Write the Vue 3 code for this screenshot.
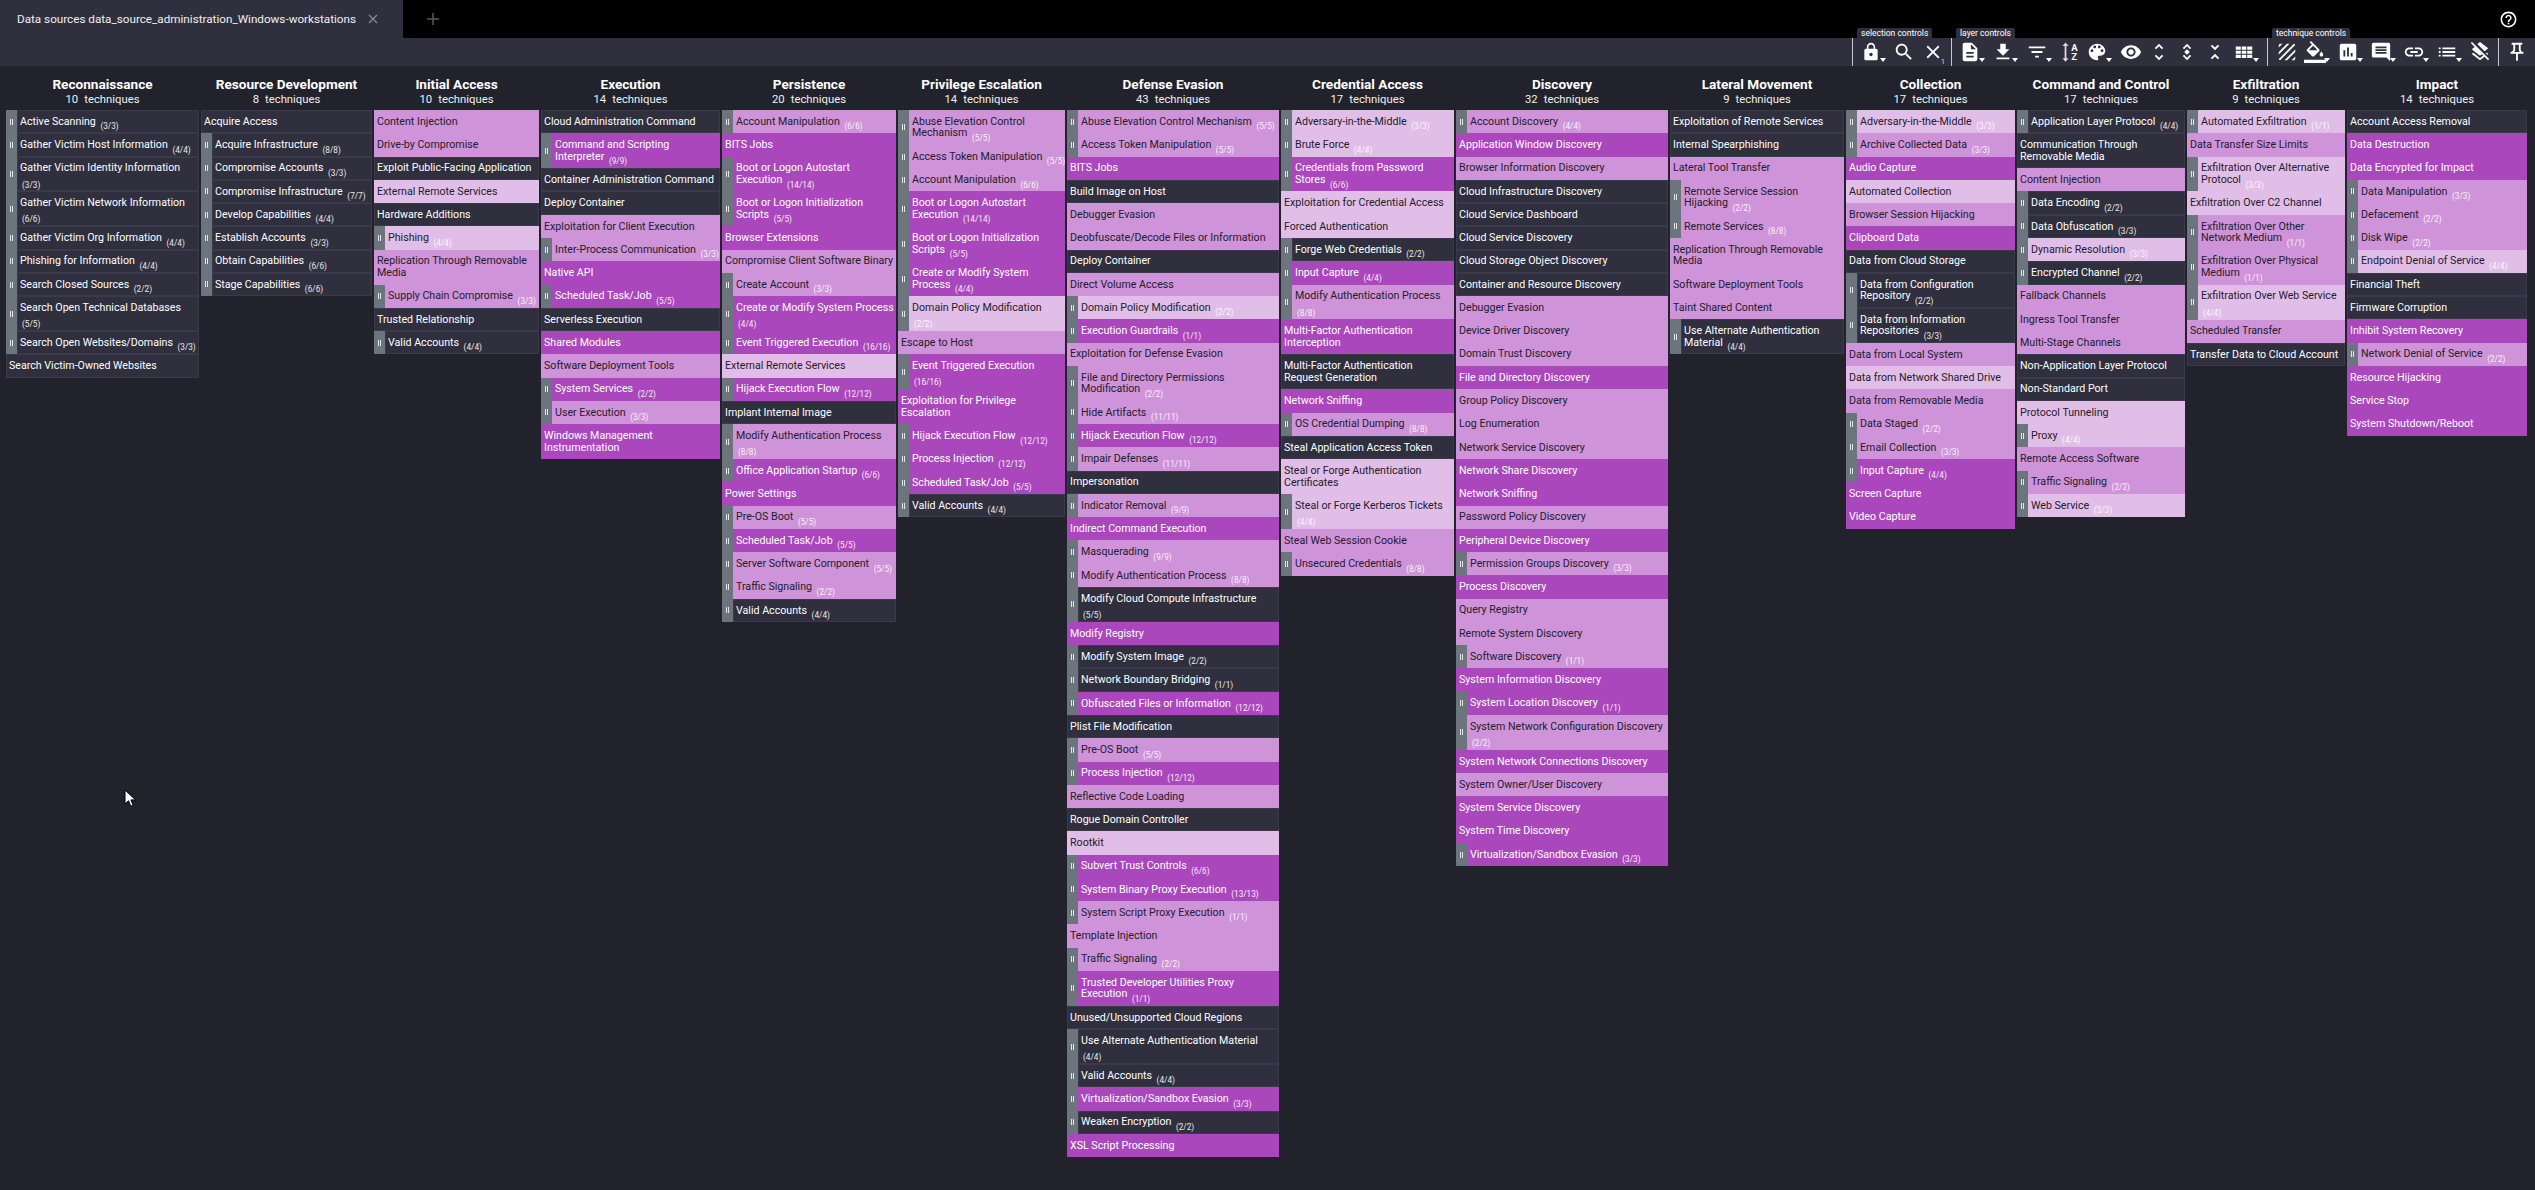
<template>
  <div class="page">
    <header class="topbar">
      <div class="tab">
        <span class="tab-title">Data sources data_source_administration_Windows-workstations</span>
        <svg class="tab-close" viewBox="0 0 10 10"><path d="M1 1l8 8M9 1l-8 8" /></svg>
      </div>
      <svg class="tab-add" viewBox="0 0 12 12"><path d="M6 0v12M0 6h12" /></svg>
      <svg class="help" viewBox="0 0 24 24">
        <path :d="icons.help" />
      </svg>
    </header>

    <div class="toolbar">
      <div v-for="group in toolGroups" :key="group.name" class="group" :class="`group-${group.name}`">
        <span v-if="group.label" class="group-label">{{ group.label }}</span>
        <div v-for="tool in group.tools" :key="tool.name" class="tool" :class="`tool-${tool.name}`">
          <template v-if="tool.name === 'sort'">
            <svg class="sort-arrow" viewBox="0 0 8 22"><path d="M4 0l3.500 4H5v14h2.500L4 22 .5 18H3V4H.5z" /></svg>
            <span class="sort-letters"><span>A</span><span>Z</span></span>
          </template>
          <svg v-else viewBox="0 0 24 24"><path :d="tool.path" /></svg>
          <span v-if="tool.menu" class="caret"></span>
          <span v-if="tool.badge" class="badge">{{ tool.badge }}</span>
        </div>
      </div>
    </div>

    <main class="matrix">
      <section v-for="tactic in tactics" :key="tactic.name" class="tactic">
        <div class="tactic-head">
          <h2>{{ tactic.name }}</h2>
          <p><span>{{ tactic.rows.length }}</span><span>techniques</span></p>
        </div>
        <div
          v-for="row in tactic.rows"
          :key="row[0]"
          class="row"
          :class="`fill-${row[1]}`"
        >
          <span v-if="row[2]" class="toggle"></span>
          <div class="cell">
            <span v-for="line in upperLines(row[0])" :key="line" class="line">{{ line }}</span>
            <span v-if="lastLine(row[0])">{{ lastLine(row[0]) }}</span>
            <span
              v-if="row[2]"
              class="count"
              :class="{ 'count-alone': !lastLine(row[0]) }"
            >({{ row[2] }})</span>
          </div>
        </div>
      </section>
    </main>

    <svg class="cursor" viewBox="0 0 12 19">
      <path d="M1 1v14l3.500-3.300 2.300 5.600 2.400-1-2.300-5.400H11.500z" />
    </svg>
  </div>
</template>

<script setup>
const icons = {
  help: "M11 18h2v-2h-2v2zm1-16C6.480 2 2 6.480 2 12s4.480 10 10 10 10-4.480 10-10S17.520 2 12 2zm0 18c-4.410 0-8-3.590-8-8s3.590-8 8-8 8 3.590 8 8-3.590 8-8 8zm0-14c-2.210 0-4 1.790-4 4h2c0-1.100.9-2 2-2s2 .9 2 2c0 2-3 1.750-3 5h2c0-2.250 3-2.500 3-5 0-2.210-1.790-4-4-4z",
  lock: "M18 8h-1V6c0-2.760-2.240-5-5-5S7 3.240 7 6v2H6c-1.100 0-2 .9-2 2v10c0 1.100.9 2 2 2h12c1.100 0 2-.9 2-2V10c0-1.100-.9-2-2-2zm-6 9c-1.100 0-2-.9-2-2s.9-2 2-2 2 .9 2 2-.9 2-2 2zm3.100-9H8.900V6c0-1.710 1.390-3.100 3.100-3.100 1.710 0 3.100 1.390 3.100 3.100v2z",
  search: "M15.500 14h-.79l-.28-.27C15.410 12.590 16 11.110 16 9.500 16 5.910 13.090 3 9.500 3S3 5.910 3 9.500 5.910 16 9.500 16c1.610 0 3.090-.59 4.230-1.570l.27.28v.79l5 4.990L20.490 19l-4.990-5zm-6 0C7.010 14 5 11.990 5 9.500S7.010 5 9.500 5 14 7.010 14 9.500 11.990 14 9.500 14z",
  clear: "M19 6.410L17.590 5 12 10.590 6.410 5 5 6.410 10.590 12 5 17.590 6.410 19 12 13.410 17.590 19 19 17.590 13.410 12z",
  file: "M14 2H6c-1.100 0-1.990.9-1.990 2L4 20c0 1.100.89 2 1.990 2H18c1.100 0 2-.9 2-2V8l-6-6zm2 16H8v-2h8v2zm0-4H8v-2h8v2zm-3-5V3.500L18.500 9H13z",
  download: "M19 9h-4V3H9v6H5l7 7 7-7zM5 18v2h14v-2H5z",
  filter: "M10 18h4v-2h-4v2zM3 6v2h18V6H3zm3 7h12v-2H6v2z",
  palette: "M12 3c-4.970 0-9 4.030-9 9s4.030 9 9 9c.83 0 1.500-.67 1.500-1.500 0-.39-.15-.74-.39-1.010-.23-.26-.38-.61-.38-.99 0-.83.67-1.500 1.500-1.500H16c2.760 0 5-2.240 5-5 0-4.420-4.030-8-9-8zm-5.500 9c-.83 0-1.500-.67-1.500-1.500S5.670 9 6.500 9 8 9.670 8 10.500 7.330 12 6.500 12zm3-4C8.670 8 8 7.330 8 6.500S8.670 5 9.500 5s1.500.67 1.500 1.500S10.330 8 9.500 8zm5 0c-.83 0-1.500-.67-1.500-1.500S13.670 5 14.500 5s1.500.67 1.500 1.500S15.330 8 14.500 8zm3 4c-.83 0-1.500-.67-1.500-1.500S16.670 9 17.500 9s1.500.67 1.500 1.500-.67 1.500-1.500 1.500z",
  eye: "M12 4.500C7 4.500 2.730 7.610 1 12c1.730 4.390 6 7.500 11 7.500s9.270-3.110 11-7.500c-1.730-4.390-6-7.500-11-7.500zM12 17c-2.760 0-5-2.240-5-5s2.240-5 5-5 5 2.240 5 5-2.240 5-5 5zm0-8c-1.660 0-3 1.340-3 3s1.340 3 3 3 3-1.340 3-3-1.340-3-3-3z",
  more: "M12 5.830L15.170 9l1.410-1.410L12 3 7.410 7.590 8.830 9 12 5.830zm0 12.340L8.830 15l-1.410 1.410L12 21l4.590-4.590L15.170 15 12 18.170z",
  moreSub: "M12 5.830L15.170 9l1.410-1.410L12 3 7.410 7.590 8.830 9 12 5.830zm0 12.340L8.830 15l-1.410 1.410L12 21l4.590-4.590L15.170 15 12 18.170zM12 9l3 3-3 3-3-3z",
  less: "M7.410 18.590L8.830 20 12 16.830 15.170 20l1.410-1.410L12 14l-4.590 4.590zm9.180-13.180L15.170 4 12 7.170 8.830 4 7.410 5.410 12 10l4.590-4.590z",
  table: "M3 6h5.500v3.500H3zM9.500 6h5v3.500h-5zM15.500 6H21v3.500h-5.500zM3 10.500h5.500v3.500H3zM9.500 10.500h5V14h-5zM15.500 10.500H21V14h-5.500zM3 15h5.500v3.500H3zM9.500 15h5v3.500h-5zM15.500 15H21v3.500h-5.500z",
  stripes: "M19.510 3.080L3.080 19.510c.09.34.27.65.51.9.25.24.56.42.9.51L20.930 4.490c-.19-.69-.73-1.230-1.420-1.410zM11.880 3L3 11.880v2.830L14.710 3h-2.830zM5 3c-1.100 0-2 .9-2 2v2l4-4H5zm14 18c.55 0 1.050-.22 1.410-.59.37-.36.59-.86.59-1.410v-2l-4 4h2zm-9.710 0h2.830L21 12.120V9.290L9.290 21z",
  fill: "M16.560 8.940L7.620 0 6.210 1.410l2.380 2.380-5.150 5.150c-.59.59-.59 1.540 0 2.120l5.500 5.500c.29.29.68.44 1.060.44s.77-.15 1.060-.44l5.500-5.500c.59-.58.59-1.530 0-2.120zM5.210 10L10 5.210 14.790 10H5.210zM19 11.500s-2 2.170-2 3.500c0 1.100.9 2 2 2s2-.9 2-2c0-1.330-2-3.500-2-3.500zM0 20.500h24V24H0z",
  chart: "M19 3H5c-1.100 0-2 .9-2 2v14c0 1.100.9 2 2 2h14c1.100 0 2-.9 2-2V5c0-1.100-.9-2-2-2zM9 17H7v-7h2v7zm4 0h-2V7h2v10zm4 0h-2v-4h2v4z",
  comment: "M20 2H4c-1.100 0-2 .9-2 2v12c0 1.100.9 2 2 2h14l4 4V4c0-1.100-.9-2-2-2zm-2 12H6v-2h12v2zm0-3H6V9h12v2zm0-3H6V6h12v2z",
  link: "M3.900 12c0-1.710 1.390-3.100 3.100-3.100h4V7H7c-2.760 0-5 2.240-5 5s2.240 5 5 5h4v-1.900H7c-1.710 0-3.100-1.390-3.100-3.100zM8 13h8v-2H8v2zm9-6h-4v1.900h4c1.710 0 3.100 1.390 3.100 3.100s-1.390 3.100-3.100 3.100h-4V17h4c2.760 0 5-2.240 5-5s-2.240-5-5-5z",
  list: "M3 13h2v-2H3v2zm0 4h2v-2H3v2zm0-8h2V7H3v2zm4 4h14v-2H7v2zm0 4h14v-2H7v2zM7 7v2h14V7H7z",
  layers: "M19.810 14.990l1.190-.92-1.430-1.430-1.190.92 1.430 1.430zm-.45-5.720L21 8l-9-7-2.910 2.270 7.870 7.880 2.400-1.880zM3.270 1L2 2.270l4.220 4.220L3 9l1.630 1.270L12 16l2.100-1.630 1.430 1.430L12 18.540l-7.370-5.730L3 14.070l9 7 4.950-3.850L20.730 21 22 19.730 3.270 1z",
  pin: "M14 4v5c0 1.120.37 2.160 1 3H9c.65-.86 1-1.900 1-3V4h4m3-2H7c-.55 0-1 .45-1 1s.45 1 1 1h1v5c0 1.660-1.340 3-3 3v2h5.970v7l1 1 1-1v-7H19v-2c-1.660 0-3-1.340-3-3V4h1c.55 0 1-.45 1-1s-.45-1-1-1z",
};

const toolGroups = [
  {
    name: "selection",
    label: "selection controls",
    tools: [
      { name: "lock", path: icons.lock, menu: true },
      { name: "search", path: icons.search },
      { name: "clear", path: icons.clear, badge: "1" },
    ],
  },
  {
    name: "layer",
    label: "layer controls",
    tools: [
      { name: "file", path: icons.file, menu: true },
      { name: "download", path: icons.download, menu: true },
      { name: "filter", path: icons.filter, menu: true },
      { name: "sort" },
      { name: "palette", path: icons.palette, menu: true },
      { name: "eye", path: icons.eye },
      { name: "more", path: icons.more },
      { name: "moresub", path: icons.moreSub },
      { name: "less", path: icons.less },
      { name: "table", path: icons.table, menu: true },
    ],
  },
  {
    name: "technique",
    label: "technique controls",
    tools: [
      { name: "stripes", path: icons.stripes },
      { name: "fill", path: icons.fill, menu: true },
      { name: "chart", path: icons.chart, menu: true },
      { name: "comment", path: icons.comment, menu: true },
      { name: "link", path: icons.link, menu: true },
      { name: "list", path: icons.list, menu: true },
      { name: "layers", path: icons.layers },
    ],
  },
  {
    name: "pin",
    tools: [{ name: "pin", path: icons.pin }],
  },
];

const upperLines = (name) => name.split("\n").slice(0, -1);
const lastLine = (name) => name.split("\n").pop();

// each row: name, fill (n = none, m = medium, d = deep, l = light), sub-technique count
// a \n in a name is where the line breaks in the matrix
const tactics = [
  {
    name: "Reconnaissance",
    rows: [
      ["Active Scanning", "n", "3/3"],
      ["Gather Victim Host Information", "n", "4/4"],
      ["Gather Victim Identity Information\n", "n", "3/3"],
      ["Gather Victim Network Information\n", "n", "6/6"],
      ["Gather Victim Org Information", "n", "4/4"],
      ["Phishing for Information", "n", "4/4"],
      ["Search Closed Sources", "n", "2/2"],
      ["Search Open Technical Databases\n", "n", "5/5"],
      ["Search Open Websites/Domains", "n", "3/3"],
      ["Search Victim-Owned Websites", "n"],
    ],
  },
  {
    name: "Resource Development",
    rows: [
      ["Acquire Access", "n"],
      ["Acquire Infrastructure", "n", "8/8"],
      ["Compromise Accounts", "n", "3/3"],
      ["Compromise Infrastructure", "n", "7/7"],
      ["Develop Capabilities", "n", "4/4"],
      ["Establish Accounts", "n", "3/3"],
      ["Obtain Capabilities", "n", "6/6"],
      ["Stage Capabilities", "n", "6/6"],
    ],
  },
  {
    name: "Initial Access",
    rows: [
      ["Content Injection", "m"],
      ["Drive-by Compromise", "m"],
      ["Exploit Public-Facing Application", "n"],
      ["External Remote Services", "l"],
      ["Hardware Additions", "n"],
      ["Phishing", "l", "4/4"],
      ["Replication Through Removable\nMedia", "m"],
      ["Supply Chain Compromise", "m", "3/3"],
      ["Trusted Relationship", "n"],
      ["Valid Accounts", "n", "4/4"],
    ],
  },
  {
    name: "Execution",
    rows: [
      ["Cloud Administration Command", "n"],
      ["Command and Scripting\nInterpreter", "d", "9/9"],
      ["Container Administration Command", "n"],
      ["Deploy Container", "n"],
      ["Exploitation for Client Execution", "m"],
      ["Inter-Process Communication", "m", "3/3"],
      ["Native API", "d"],
      ["Scheduled Task/Job", "d", "5/5"],
      ["Serverless Execution", "n"],
      ["Shared Modules", "d"],
      ["Software Deployment Tools", "m"],
      ["System Services", "d", "2/2"],
      ["User Execution", "m", "3/3"],
      ["Windows Management\nInstrumentation", "d"],
    ],
  },
  {
    name: "Persistence",
    rows: [
      ["Account Manipulation", "m", "6/6"],
      ["BITS Jobs", "d"],
      ["Boot or Logon Autostart\nExecution", "d", "14/14"],
      ["Boot or Logon Initialization\nScripts", "d", "5/5"],
      ["Browser Extensions", "d"],
      ["Compromise Client Software Binary", "m"],
      ["Create Account", "m", "3/3"],
      ["Create or Modify System Process\n", "d", "4/4"],
      ["Event Triggered Execution", "d", "16/16"],
      ["External Remote Services", "l"],
      ["Hijack Execution Flow", "d", "12/12"],
      ["Implant Internal Image", "n"],
      ["Modify Authentication Process\n", "m", "8/8"],
      ["Office Application Startup", "d", "6/6"],
      ["Power Settings", "d"],
      ["Pre-OS Boot", "m", "5/5"],
      ["Scheduled Task/Job", "d", "5/5"],
      ["Server Software Component", "m", "5/5"],
      ["Traffic Signaling", "m", "2/2"],
      ["Valid Accounts", "n", "4/4"],
    ],
  },
  {
    name: "Privilege Escalation",
    rows: [
      ["Abuse Elevation Control\nMechanism", "m", "5/5"],
      ["Access Token Manipulation", "m", "5/5"],
      ["Account Manipulation", "m", "6/6"],
      ["Boot or Logon Autostart\nExecution", "d", "14/14"],
      ["Boot or Logon Initialization\nScripts", "d", "5/5"],
      ["Create or Modify System\nProcess", "d", "4/4"],
      ["Domain Policy Modification\n", "l", "2/2"],
      ["Escape to Host", "m"],
      ["Event Triggered Execution\n", "d", "16/16"],
      ["Exploitation for Privilege\nEscalation", "d"],
      ["Hijack Execution Flow", "d", "12/12"],
      ["Process Injection", "d", "12/12"],
      ["Scheduled Task/Job", "d", "5/5"],
      ["Valid Accounts", "n", "4/4"],
    ],
  },
  {
    name: "Defense Evasion",
    rows: [
      ["Abuse Elevation Control Mechanism", "m", "5/5"],
      ["Access Token Manipulation", "m", "5/5"],
      ["BITS Jobs", "d"],
      ["Build Image on Host", "n"],
      ["Debugger Evasion", "m"],
      ["Deobfuscate/Decode Files or Information", "m"],
      ["Deploy Container", "n"],
      ["Direct Volume Access", "m"],
      ["Domain Policy Modification", "l", "2/2"],
      ["Execution Guardrails", "d", "1/1"],
      ["Exploitation for Defense Evasion", "m"],
      ["File and Directory Permissions\nModification", "m", "2/2"],
      ["Hide Artifacts", "m", "11/11"],
      ["Hijack Execution Flow", "d", "12/12"],
      ["Impair Defenses", "m", "11/11"],
      ["Impersonation", "n"],
      ["Indicator Removal", "m", "9/9"],
      ["Indirect Command Execution", "d"],
      ["Masquerading", "m", "9/9"],
      ["Modify Authentication Process", "m", "8/8"],
      ["Modify Cloud Compute Infrastructure\n", "n", "5/5"],
      ["Modify Registry", "d"],
      ["Modify System Image", "n", "2/2"],
      ["Network Boundary Bridging", "n", "1/1"],
      ["Obfuscated Files or Information", "d", "12/12"],
      ["Plist File Modification", "n"],
      ["Pre-OS Boot", "m", "5/5"],
      ["Process Injection", "d", "12/12"],
      ["Reflective Code Loading", "m"],
      ["Rogue Domain Controller", "n"],
      ["Rootkit", "l"],
      ["Subvert Trust Controls", "d", "6/6"],
      ["System Binary Proxy Execution", "d", "13/13"],
      ["System Script Proxy Execution", "m", "1/1"],
      ["Template Injection", "m"],
      ["Traffic Signaling", "m", "2/2"],
      ["Trusted Developer Utilities Proxy\nExecution", "d", "1/1"],
      ["Unused/Unsupported Cloud Regions", "n"],
      ["Use Alternate Authentication Material\n", "n", "4/4"],
      ["Valid Accounts", "n", "4/4"],
      ["Virtualization/Sandbox Evasion", "d", "3/3"],
      ["Weaken Encryption", "n", "2/2"],
      ["XSL Script Processing", "d"],
    ],
  },
  {
    name: "Credential Access",
    rows: [
      ["Adversary-in-the-Middle", "l", "3/3"],
      ["Brute Force", "l", "4/4"],
      ["Credentials from Password\nStores", "d", "6/6"],
      ["Exploitation for Credential Access", "l"],
      ["Forced Authentication", "l"],
      ["Forge Web Credentials", "n", "2/2"],
      ["Input Capture", "d", "4/4"],
      ["Modify Authentication Process\n", "m", "8/8"],
      ["Multi-Factor Authentication\nInterception", "d"],
      ["Multi-Factor Authentication\nRequest Generation", "n"],
      ["Network Sniffing", "d"],
      ["OS Credential Dumping", "m", "8/8"],
      ["Steal Application Access Token", "n"],
      ["Steal or Forge Authentication\nCertificates", "l"],
      ["Steal or Forge Kerberos Tickets\n", "l", "4/4"],
      ["Steal Web Session Cookie", "m"],
      ["Unsecured Credentials", "m", "8/8"],
    ],
  },
  {
    name: "Discovery",
    rows: [
      ["Account Discovery", "m", "4/4"],
      ["Application Window Discovery", "d"],
      ["Browser Information Discovery", "m"],
      ["Cloud Infrastructure Discovery", "n"],
      ["Cloud Service Dashboard", "n"],
      ["Cloud Service Discovery", "n"],
      ["Cloud Storage Object Discovery", "n"],
      ["Container and Resource Discovery", "n"],
      ["Debugger Evasion", "m"],
      ["Device Driver Discovery", "m"],
      ["Domain Trust Discovery", "m"],
      ["File and Directory Discovery", "d"],
      ["Group Policy Discovery", "m"],
      ["Log Enumeration", "m"],
      ["Network Service Discovery", "m"],
      ["Network Share Discovery", "d"],
      ["Network Sniffing", "d"],
      ["Password Policy Discovery", "m"],
      ["Peripheral Device Discovery", "d"],
      ["Permission Groups Discovery", "m", "3/3"],
      ["Process Discovery", "d"],
      ["Query Registry", "m"],
      ["Remote System Discovery", "m"],
      ["Software Discovery", "m", "1/1"],
      ["System Information Discovery", "d"],
      ["System Location Discovery", "d", "1/1"],
      ["System Network Configuration Discovery\n", "m", "2/2"],
      ["System Network Connections Discovery", "d"],
      ["System Owner/User Discovery", "m"],
      ["System Service Discovery", "d"],
      ["System Time Discovery", "d"],
      ["Virtualization/Sandbox Evasion", "d", "3/3"],
    ],
  },
  {
    name: "Lateral Movement",
    rows: [
      ["Exploitation of Remote Services", "n"],
      ["Internal Spearphishing", "n"],
      ["Lateral Tool Transfer", "m"],
      ["Remote Service Session\nHijacking", "m", "2/2"],
      ["Remote Services", "m", "8/8"],
      ["Replication Through Removable\nMedia", "m"],
      ["Software Deployment Tools", "m"],
      ["Taint Shared Content", "m"],
      ["Use Alternate Authentication\nMaterial", "n", "4/4"],
    ],
  },
  {
    name: "Collection",
    rows: [
      ["Adversary-in-the-Middle", "l", "3/3"],
      ["Archive Collected Data", "m", "3/3"],
      ["Audio Capture", "d"],
      ["Automated Collection", "l"],
      ["Browser Session Hijacking", "m"],
      ["Clipboard Data", "d"],
      ["Data from Cloud Storage", "n"],
      ["Data from Configuration\nRepository", "n", "2/2"],
      ["Data from Information\nRepositories", "n", "3/3"],
      ["Data from Local System", "m"],
      ["Data from Network Shared Drive", "l"],
      ["Data from Removable Media", "m"],
      ["Data Staged", "m", "2/2"],
      ["Email Collection", "m", "3/3"],
      ["Input Capture", "d", "4/4"],
      ["Screen Capture", "d"],
      ["Video Capture", "d"],
    ],
  },
  {
    name: "Command and Control",
    rows: [
      ["Application Layer Protocol", "n", "4/4"],
      ["Communication Through\nRemovable Media", "n"],
      ["Content Injection", "m"],
      ["Data Encoding", "n", "2/2"],
      ["Data Obfuscation", "n", "3/3"],
      ["Dynamic Resolution", "l", "3/3"],
      ["Encrypted Channel", "n", "2/2"],
      ["Fallback Channels", "m"],
      ["Ingress Tool Transfer", "m"],
      ["Multi-Stage Channels", "m"],
      ["Non-Application Layer Protocol", "n"],
      ["Non-Standard Port", "n"],
      ["Protocol Tunneling", "l"],
      ["Proxy", "l", "4/4"],
      ["Remote Access Software", "m"],
      ["Traffic Signaling", "m", "2/2"],
      ["Web Service", "l", "3/3"],
    ],
  },
  {
    name: "Exfiltration",
    rows: [
      ["Automated Exfiltration", "l", "1/1"],
      ["Data Transfer Size Limits", "m"],
      ["Exfiltration Over Alternative\nProtocol", "l", "3/3"],
      ["Exfiltration Over C2 Channel", "l"],
      ["Exfiltration Over Other\nNetwork Medium", "m", "1/1"],
      ["Exfiltration Over Physical\nMedium", "m", "1/1"],
      ["Exfiltration Over Web Service\n", "l", "4/4"],
      ["Scheduled Transfer", "m"],
      ["Transfer Data to Cloud Account", "n"],
    ],
  },
  {
    name: "Impact",
    rows: [
      ["Account Access Removal", "n"],
      ["Data Destruction", "d"],
      ["Data Encrypted for Impact", "d"],
      ["Data Manipulation", "m", "3/3"],
      ["Defacement", "m", "2/2"],
      ["Disk Wipe", "m", "2/2"],
      ["Endpoint Denial of Service", "l", "4/4"],
      ["Financial Theft", "n"],
      ["Firmware Corruption", "n"],
      ["Inhibit System Recovery", "d"],
      ["Network Denial of Service", "m", "2/2"],
      ["Resource Hijacking", "d"],
      ["Service Stop", "d"],
      ["System Shutdown/Reboot", "d"],
    ],
  },
];
</script>

<style>
html,
body {
  background: #21222c;
}
</style>

<style scoped>
.page {
  position: relative;
  height: 1190px;
  overflow: hidden;
  background: #21222c;
  color: #fff;
  font-family: Roboto, "Liberation Sans", sans-serif;
}

.topbar {
  display: flex;
  align-items: center;
  height: 38px;
  background: #000;
}

.tab {
  display: flex;
  align-items: center;
  width: 403px;
  height: 100%;
  padding-left: 17px;
  box-sizing: border-box;
  background: #2f2f3e;
}

.tab-title {
  width: 351px;
  font-size: 11.7px;
  color: #f0f0f0;
  white-space: nowrap;
}

.tab-close {
  width: 10px;
  height: 10px;
  fill: none;
  stroke: #8a8a95;
  stroke-width: 1.2;
}

.tab-add {
  width: 12px;
  height: 12px;
  margin-left: 24px;
  fill: none;
  stroke: #5a5a5a;
  stroke-width: 1.5;
}

.help {
  width: 19px;
  height: 19px;
  margin-left: auto;
  margin-right: 17px;
  fill: #fff;
}

.toolbar {
  display: flex;
  justify-content: flex-end;
  height: 28px;
  background: #2f2f3e;
}

.group {
  position: relative;
  display: grid;
  height: 28px;
  box-sizing: border-box;
  border-left: 1px solid #c9c9c9;
}

.group-selection {
  width: 99px;
  padding-left: 7px;
  grid-template-columns: 33px 29px 22px;
}

.group-layer {
  width: 316px;
  padding-left: 7px;
  grid-template-columns: 33px 34px 33px 27px 34px 28px 28px 28px 29px 22px;
}

.group-technique {
  width: 231px;
  padding-left: 8px;
  grid-template-columns: 28px 33px 33px 33px 33px 33px 22px;
}

.group-pin {
  width: 37px;
  padding-left: 7px;
  grid-template-columns: 22px;
}

.group-label {
  position: absolute;
  bottom: 100%;
  left: 4px;
  height: 10px;
  padding: 0 4px;
  font-size: 8.5px;
  line-height: 11px;
  white-space: nowrap;
  background: #2f2f3e;
  border-radius: 2px 2px 0 0;
}

.tool {
  position: relative;
  display: flex;
  align-items: center;
  justify-content: center;
  width: 22px;
  height: 28px;
}

.tool svg {
  width: 22px;
  height: 22px;
  fill: #fff;
}

.tool-lock svg {
  width: 20px;
  height: 20px;
}

.tool-sort {
  gap: 2px;
}

.tool .sort-arrow {
  width: 7px;
  height: 20px;
  fill: #d8d8d8;
}

.sort-letters {
  display: flex;
  flex-direction: column;
  font-size: 9.5px;
  font-weight: 700;
  line-height: 9.5px;
}

.caret {
  position: absolute;
  left: 20px;
  top: 20px;
  width: 0;
  height: 0;
  border-left: 3px solid transparent;
  border-right: 3px solid transparent;
  border-top: 4px solid #fff;
}

.badge {
  position: absolute;
  left: 19px;
  top: 20px;
  font-size: 7px;
  color: #ddd;
}

.matrix {
  display: grid;
  grid-template-columns: 193px 171px 165px 179px 174px 167px 212px 173px 212px 174px 169px 168px 158px 180px;
  column-gap: 2px;
  align-items: start;
  padding-left: 6px;
}

.tactic-head {
  height: 44px;
  padding-top: 10px;
  box-sizing: border-box;
  text-align: center;
}

.tactic-head h2 {
  margin: 0;
  font-size: 13.6px;
  font-weight: 700;
  line-height: 16px;
}

.tactic-head p {
  display: flex;
  justify-content: center;
  gap: 6px;
  margin: 0;
  font-size: 11.3px;
  line-height: 16px;
  color: #f0f0f0;
}

.row {
  display: flex;
  align-items: stretch;
}

.toggle {
  display: flex;
  align-items: center;
  justify-content: center;
  flex: 0 0 11px;
  background: #6c757d;
}

.toggle::before {
  content: "";
  width: 1.5px;
  height: 6px;
  border-left: 1.5px solid #e6e6e6;
  border-right: 1.5px solid #e6e6e6;
}

.cell {
  flex: 1;
  min-width: 0;
  padding: 5.8px 0 5.8px 3px;
  font-size: 10.65px;
  line-height: 11.67px;
  white-space: nowrap;
}

.line {
  display: block;
}

.count {
  margin-left: 4.6px;
  font-size: 8.2px;
  line-height: 0;
  vertical-align: -4.5px;
  opacity: 0.9;
}

.count-alone {
  margin-left: 2px;
}

.fill-n .cell {
  background: #2f2f3e;
  box-shadow: inset 0 0 0 1px #3a3a4b;
  color: #fff;
}

.fill-m .cell {
  background: #ce93d8;
  color: #22202c;
}

.fill-d .cell {
  background: #ab47bc;
  color: #fff;
}

.fill-l .cell {
  background: #e1bee7;
  color: #22202c;
}

.fill-m .count,
.fill-l .count {
  color: #fff;
}

.cursor {
  position: absolute;
  left: 124px;
  top: 789px;
  width: 12px;
  height: 19px;
  fill: #fff;
  stroke: #000;
  stroke-width: 1;
}
</style>
